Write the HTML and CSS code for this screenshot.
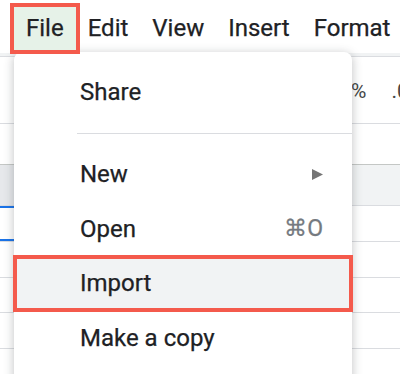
FILE: index.html
```html
<!DOCTYPE html>
<html>
<head>
<meta charset="utf-8">
<link rel="stylesheet" href="styles.css">
</head>
<body>
<div class="app">
  <div class="menubar">
    <span class="mitem active">File</span>
    <span class="mitem">Edit</span>
    <span class="mitem">View</span>
    <span class="mitem">Insert</span>
    <span class="mitem">Format</span>
  </div>
  <div class="strip"></div>
  <div class="toolbar"><span class="pct">%</span><span class="dec">.0</span></div>
  <div class="formula"></div>
  <div class="grid">
    <div class="row head"><div class="l"></div><div class="r"></div></div>
    <div class="row r1"><div class="l"></div><div class="r"></div></div>
    <div class="row r2"><div class="l"></div><div class="r"></div></div>
    <div class="row r3"><div class="l"></div><div class="r"></div></div>
    <div class="row r4"><div class="l"></div><div class="r"></div></div>
    <div class="row r5"><div class="l"></div><div class="r"></div></div>
  </div>

  <div class="menu">
    <div class="item">Share</div>
    <div class="sep"></div>
    <div class="item"><span>New</span>
      <svg class="arrow" width="11" height="11" viewBox="0 0 11 11"><polygon points="0,0 11,5.5 0,11" fill="#757575"/></svg>
    </div>
    <div class="item"><span>Open</span><span class="kbd">⌘O</span></div>
    <div class="item hl"><span>Import</span></div>
    <div class="item"><span>Make a copy</span></div>
  </div>
</div>
</body>
</html>
```
FILE: styles.css
```css
html, body {
  margin: 0;
  padding: 0;
  background: #fff;
}
body {
  width: 400px;
  height: 374px;
  overflow: hidden;
  font-family: Roboto, "Liberation Sans", sans-serif;
  color: #202124;
}
.app {
  position: relative;
  width: 400px;
  height: 374px;
  overflow: hidden;
}
.menubar {
  height: 53px;
  box-sizing: border-box;
  padding: 7px 0 0 14px;
  display: flex;
  align-items: flex-start;
  font-size: 24px;
  white-space: nowrap;
  -webkit-text-stroke: 0.25px currentColor;
}
.mitem {
  height: 43px;
  line-height: 43px;
  padding: 0 12px;
}
.mitem.active {
  position: relative;
  z-index: 5;
  background: #e6f2e8;
  outline: 4px solid #f45a4c;
}
.strip {
  height: 3px;
  background: #f1f3f4;
  border-bottom: 1px solid #dadce0;
}
.toolbar {
  height: 66px;
  border-bottom: 1px solid #dadce0;
  display: flex;
  align-items: center;
  padding-left: 351px;
  font-size: 21px;
  color: #444746;
  gap: 25px;
  box-sizing: content-box;
}
.toolbar .pct { margin-top: 2px; }
.toolbar .dec { margin-top: 2px; }
.formula {
  height: 40px;
  border-bottom: 1px solid #c4c7c5;
}
.grid {
  display: flex;
  flex-direction: column;
}
.row {
  display: flex;
  box-sizing: border-box;
  border-bottom: 1px solid #dadce0;
}
.row .l { width: 14px; box-sizing: border-box; }
.row .r { flex: 1; }
.row.head {
  height: 41px;
  background: #f1f3f4;
}
.row.head .l { background: #e6e8eb; }
.row.r1 { height: 36px; }
.row.r1 .l {
  border-top: 2px solid #1a73e8;
  border-bottom: 2px solid #1a73e8;
  height: 35px;
}
.row.r2 { height: 36px; }
.row.r3 { height: 35px; }
.row.r4 { height: 36px; }
.row.r5 { height: 40px; }

.menu {
  position: absolute;
  left: 14px;
  top: 52px;
  width: 338px;
  height: 360px;
  background: #fff;
  border-radius: 8px;
  box-shadow: 0 2px 10px 1px rgba(60, 64, 67, 0.28);
  padding-top: 13px;
  box-sizing: border-box;
  z-index: 3;
  font-size: 24px;
  -webkit-text-stroke: 0.25px currentColor;
}
.item {
  height: 54.5px;
  display: flex;
  align-items: center;
  padding: 0 29px 0 66px;
  justify-content: space-between;
  white-space: nowrap;
}
.sep {
  height: 1px;
  background: #dadce0;
  margin: 13px 0 13.5px 63px;
}
.arrow { display: block; margin-top: 1px; }
.kbd {
  color: #757a80;
  font-size: 23px;
}
.item.hl {
  background: #f1f3f4;
  outline: 4px solid #f45a4c;
  outline-offset: -3px;
}
```
